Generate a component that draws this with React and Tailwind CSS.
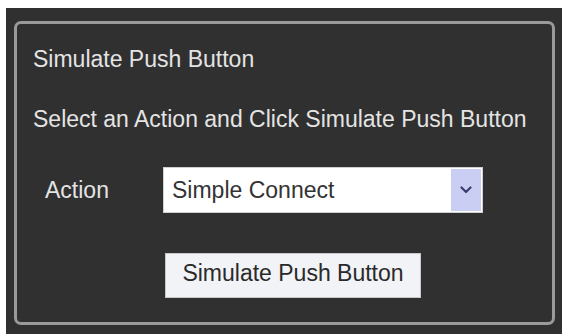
export default function App() {
  return (
    <div className="w-[562px] h-[334px] bg-white pt-[8px] pl-[6px] flex" style={{ fontFamily: '"Liberation Sans", Arial, sans-serif' }}>
      <div className="flex-1 bg-[#303030] pt-[13px] pl-[8px] pr-[7px] pb-[9px] flex">
        <div className="flex-1 border-[3px] border-[#9a9a9a] rounded-[7px] pl-[16px] pt-[22px] flex flex-col">
          <div className="text-[23px] leading-[26px] text-[#e4e4e4]">Simulate Push Button</div>
          <div className="mt-[34px] text-[23px] leading-[26px] text-[#e4e4e4] whitespace-nowrap">Select an Action and Click Simulate Push Button</div>
          <div className="mt-[35px] flex items-center">
            <div className="w-[130px] pl-[12px] text-[23px] leading-[26px] text-[#e4e4e4]">Action</div>
            <div className="w-[320px] h-[46px] bg-white border border-[#d0d0d0] flex items-center">
              <div className="flex-1 pl-[8px] text-[23px] leading-[26px] text-[#333333]">Simple Connect</div>
              <div className="w-[30px] self-stretch my-[1px] mr-[1px] bg-[#c9cef2] flex items-center justify-center">
                <svg width="12" height="8" viewBox="0 0 12 8">
                  <path d="M1.5 1.5 L6 6 L10.5 1.5" fill="none" stroke="#3b3f70" strokeWidth="2.2" strokeLinecap="round" strokeLinejoin="round" />
                </svg>
              </div>
            </div>
          </div>
          <div className="mt-[40px] pl-[132px]">
            <div className="w-[256px] h-[45px] bg-[#f1f3f6] border border-[#c8c8c8] flex items-center justify-center pb-[6px] text-[23px] leading-[26px] text-[#2a2a2a]">
              Simulate Push Button
            </div>
          </div>
        </div>
      </div>
    </div>
  );
}
